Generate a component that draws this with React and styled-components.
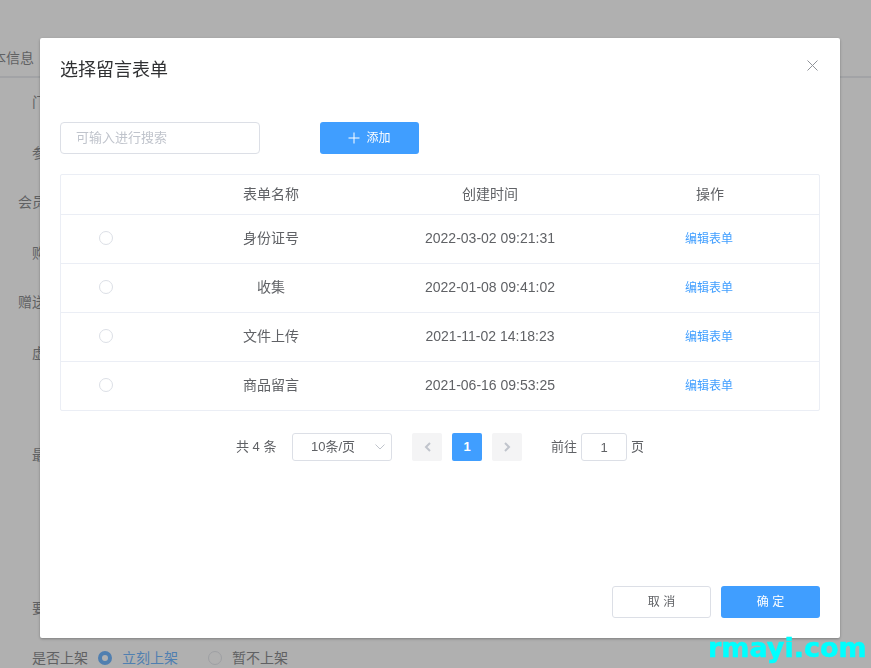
import React from 'react'
import styled, { createGlobalStyle } from 'styled-components'

const forms = [
  { name: '身份证号', time: '2022-03-02 09:21:31' },
  { name: '收集', time: '2022-01-08 09:41:02' },
  { name: '文件上传', time: '2021-11-02 14:18:23' },
  { name: '商品留言', time: '2021-06-16 09:53:25' },
]

const formRows = [
  { label: '门店价格', height: 51 },
  { label: '参与活动', height: 49 },
  { label: '会员价设置', height: 51 },
  { label: '购买限制', height: 49 },
  { label: '赠送优惠券', height: 51 },
  { label: '虚拟销量', height: 102 },
  { label: '最低消费', height: 153 },
  { label: '要求留言', height: 50 },
]

const App = () => {
  return (
    <>
      <GlobalStyle />
      <Page>
        <Tabs>
          <TabLabel>基本信息</TabLabel>
        </Tabs>
        <Form>
          {formRows.map((row) => (
            <FormRow key={row.label} $height={row.height}>
              <FormLabel>{row.label}</FormLabel>
            </FormRow>
          ))}
          <FormRow $height={50}>
            <FormLabel>是否上架</FormLabel>
            <PageRadio $checked />
            <PageRadioText $checked>立刻上架</PageRadioText>
            <PageRadio />
            <PageRadioText>暂不上架</PageRadioText>
          </FormRow>
        </Form>
      </Page>

      <Overlay>
        <Dialog>
          <DialogHeader>
            <DialogTitle>选择留言表单</DialogTitle>
            <CloseButton>
              <svg width="11" height="11" viewBox="0 0 11 11" fill="none" stroke="#909399" strokeWidth="1">
                <path d="M0.5 0.5 L10.5 10.5 M10.5 0.5 L0.5 10.5" />
              </svg>
            </CloseButton>
          </DialogHeader>

          <DialogBody>
            <Toolbar>
              <SearchInput placeholder="可输入进行搜索" />
              <AddButton>
                <svg width="12" height="12" viewBox="0 0 12 12" fill="none" stroke="#fff" strokeWidth="1">
                  <path d="M6 0.5 V11.5 M0.5 6 H11.5" />
                </svg>
                添加
              </AddButton>
            </Toolbar>

            <Table>
              <HeadRow>
                <Cell />
                <Cell>表单名称</Cell>
                <Cell>创建时间</Cell>
                <Cell $action>操作</Cell>
              </HeadRow>
              {forms.map((form) => (
                <BodyRow key={form.name}>
                  <Cell><Radio /></Cell>
                  <Cell>{form.name}</Cell>
                  <Cell>{form.time}</Cell>
                  <Cell $action><EditLink>编辑表单</EditLink></Cell>
                </BodyRow>
              ))}
            </Table>

            <Pagination>
              <Total>共 4 条</Total>
              <PageSize>
                10条/页
                <SelectArrow>
                  <svg width="10" height="6" viewBox="0 0 10 6" fill="none" stroke="#c0c4cc" strokeWidth="1">
                    <path d="M0.5 0.5 L5 5 L9.5 0.5" />
                  </svg>
                </SelectArrow>
              </PageSize>
              <PagerButton>
                <svg width="7" height="10" viewBox="0 0 7 10" fill="none" stroke="#c0c4cc" strokeWidth="2">
                  <path d="M6 1 L2 5 L6 9" />
                </svg>
              </PagerButton>
              <PagerNumber>1</PagerNumber>
              <PagerButton>
                <svg width="7" height="10" viewBox="0 0 7 10" fill="none" stroke="#c0c4cc" strokeWidth="2">
                  <path d="M1 1 L5 5 L1 9" />
                </svg>
              </PagerButton>
              <Jumper>
                前往
                <JumperInput defaultValue="1" />
                页
              </Jumper>
            </Pagination>
          </DialogBody>

          <DialogFooter>
            <FooterButton>取 消</FooterButton>
            <FooterButton $primary>确 定</FooterButton>
          </DialogFooter>
        </Dialog>
      </Overlay>

      <Watermark>rmayi.com</Watermark>
    </>
  )
}

export default App

const GlobalStyle = createGlobalStyle`
  html, body {
    margin: 0;
    padding: 0;
    height: 100%;
    overflow: hidden;
    background: #fff;
    font-family: "Liberation Sans", "Noto Sans CJK SC", sans-serif;
    font-size: 14px;
    line-height: 20px;
    color: #606266;
  }
  * {
    box-sizing: border-box;
  }
`

const Page = styled.div`
  width: 871px;
  height: 668px;
  overflow: hidden;
  opacity: 0.72;
`

const Tabs = styled.div`
  height: 78px;
  padding-top: 48px;
  border-bottom: 2px solid #e4e7ed;
`

const TabLabel = styled.div`
  margin-left: -22px;
`

const Form = styled.div`
  display: flex;
  flex-direction: column;
`

const FormRow = styled.div`
  height: ${(p) => p.$height}px;
  display: flex;
  align-items: flex-start;
  padding-top: 14px;
`

const FormLabel = styled.div`
  width: 88px;
  text-align: right;
  flex-shrink: 0;
  margin-right: 10px;
`

const PageRadio = styled.span`
  width: 14px;
  height: 14px;
  margin-top: 3px;
  border-radius: 50%;
  flex-shrink: 0;
  border: ${(p) => (p.$checked ? '4px solid #409eff' : '1px solid #dcdfe6')};
  background: #fff;
`

const PageRadioText = styled.span`
  margin-left: 10px;
  margin-right: 30px;
  color: ${(p) => (p.$checked ? '#409eff' : '#606266')};
`

const Overlay = styled.div`
  position: fixed;
  inset: 0;
  background: rgba(0, 0, 0, 0.31);
  padding: 38px 0 0 40px;
  display: flex;
  align-items: flex-start;
`

const Dialog = styled.div`
  width: 800px;
  height: 600px;
  background: #fff;
  border-radius: 2px;
  box-shadow: 0 1px 3px rgba(0, 0, 0, 0.3);
  display: flex;
  flex-direction: column;
`

const DialogHeader = styled.div`
  display: flex;
  justify-content: space-between;
  align-items: flex-start;
  padding: 20px 22px 20px 20px;
`

const DialogTitle = styled.div`
  font-size: 18px;
  line-height: 24px;
  color: #303133;
`

const CloseButton = styled.div`
  display: flex;
  padding-top: 2px;
`

const DialogBody = styled.div`
  flex: 1;
  padding: 20px 20px 0;
`

const Toolbar = styled.div`
  display: flex;
  gap: 60px;
  margin-bottom: 20px;
`

const SearchInput = styled.input`
  width: 200px;
  height: 32px;
  padding: 0 15px 2px;
  border: 1px solid #dcdfe6;
  border-radius: 4px;
  outline: none;
  font: inherit;
  font-size: 13px;
  color: #606266;

  &::placeholder {
    color: #c0c4cc;
  }
`

const AddButton = styled.button`
  width: 99px;
  height: 32px;
  padding: 0;
  border: none;
  border-radius: 3px;
  background: #409eff;
  color: #fff;
  font: inherit;
  font-size: 12px;
  display: flex;
  align-items: center;
  justify-content: center;
  gap: 6px;
`

const Table = styled.div`
  border: 1px solid #ebeef5;
  border-radius: 2px;
`

const HeadRow = styled.div`
  display: grid;
  grid-template-columns: 91px 238px 200px 229px;
  height: 40px;
  border-bottom: 1px solid #ebeef5;
`

const BodyRow = styled(HeadRow)`
  height: 49px;

  &:last-child {
    height: 48px;
    border-bottom: none;
  }
`

const Cell = styled.div`
  display: flex;
  align-items: center;
  justify-content: center;
  padding-bottom: 2px;
  padding-left: ${(p) => (p.$action ? '11px' : '0')};
  color: #606266;
`

const Radio = styled.span`
  width: 14px;
  height: 14px;
  margin-right: 2px;
  border: 1px solid #dcdfe6;
  border-radius: 50%;
  background: #fff;
`

const EditLink = styled.span`
  margin: 2px 2px 0 0;
  font-size: 12px;
  color: #409eff;
`

const Pagination = styled.div`
  display: flex;
  align-items: center;
  height: 28px;
  margin-top: 22px;
  padding-left: 176px;
  font-size: 13px;
`

const Total = styled.span`
  margin-right: 15px;
  width: 41px;
  white-space: nowrap;
`

const PageSize = styled.div`
  position: relative;
  width: 100px;
  height: 28px;
  margin-right: 20px;
  padding-left: 18px;
  border: 1px solid #dcdfe6;
  border-radius: 3px;
  line-height: 25px;
`

const SelectArrow = styled.span`
  position: absolute;
  right: 6px;
  top: 10px;
  display: flex;
`

const PagerButton = styled.div`
  width: 30px;
  height: 28px;
  border-radius: 2px;
  background: #f4f4f5;
  display: flex;
  align-items: center;
  justify-content: center;
`

const PagerNumber = styled(PagerButton)`
  margin: 0 10px;
  background: #409eff;
  color: #fff;
  font-weight: 700;
`

const Jumper = styled.div`
  margin-left: 29px;
  display: flex;
  align-items: center;
  gap: 4px;
`

const JumperInput = styled.input`
  width: 46px;
  height: 28px;
  padding: 0 3px;
  border: 1px solid #dcdfe6;
  border-radius: 3px;
  outline: none;
  text-align: center;
  font: inherit;
  color: #606266;
`

const DialogFooter = styled.div`
  display: flex;
  justify-content: flex-end;
  gap: 10px;
  padding: 0 20px 20px;
`

const FooterButton = styled.button`
  width: 99px;
  height: 32px;
  padding: 0;
  border-radius: 3px;
  border: ${(p) => (p.$primary ? 'none' : '1px solid #dcdfe6')};
  background: ${(p) => (p.$primary ? '#409eff' : '#fff')};
  color: ${(p) => (p.$primary ? '#fff' : '#606266')};
  font: inherit;
  font-size: 12px;
`

const Watermark = styled.div`
  position: fixed;
  left: 708px;
  top: 632px;
  font-family: "DejaVu Sans", sans-serif;
  font-weight: 700;
  font-size: 27px;
  line-height: 32px;
  color: #00ffff;
  -webkit-text-stroke: 0.5px #00ffff;
  white-space: nowrap;
`
